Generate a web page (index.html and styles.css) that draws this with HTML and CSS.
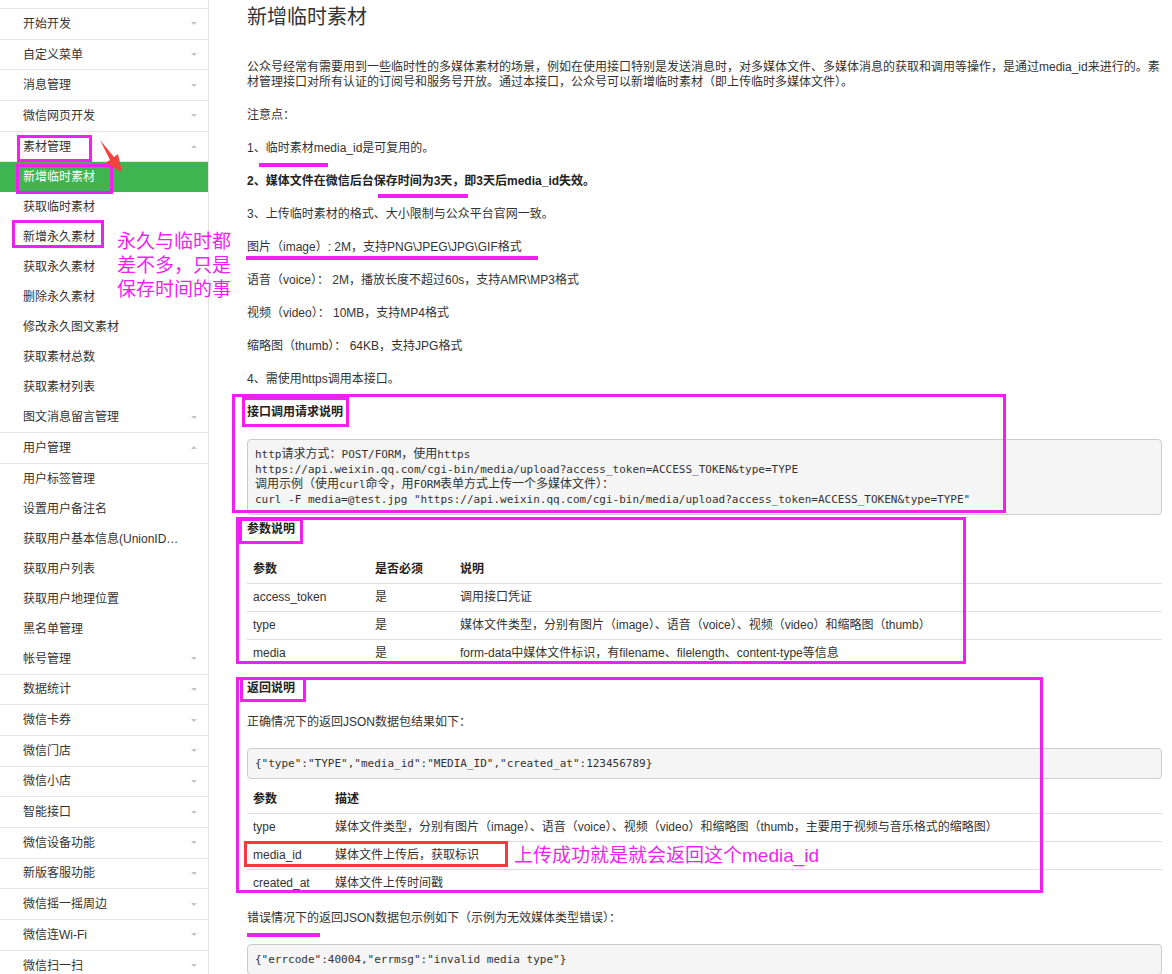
FILE: index.html
```html
<!DOCTYPE html>
<html lang="zh-CN">
<head>
<meta charset="utf-8">
<title>新增临时素材</title>
<link rel="stylesheet" href="styles.css">
</head>
<body>
<div class="page">
  <nav class="nav">
    <ul class="nav-list">
      <li class="nav-item nav-head"><span class="label">开始开发</span><i class="caret"></i></li>
      <li class="nav-item nav-head"><span class="label">自定义菜单</span><i class="caret"></i></li>
      <li class="nav-item nav-head"><span class="label">消息管理</span><i class="caret"></i></li>
      <li class="nav-item nav-head"><span class="label">微信网页开发</span><i class="caret"></i></li>
      <li class="nav-item nav-head"><span class="label">素材管理</span><i class="caret up"></i></li>
      <li class="nav-item active"><span class="label">新增临时素材</span></li>
      <li class="nav-item"><span class="label">获取临时素材</span></li>
      <li class="nav-item"><span class="label">新增永久素材</span></li>
      <li class="nav-item"><span class="label">获取永久素材</span></li>
      <li class="nav-item"><span class="label">删除永久素材</span></li>
      <li class="nav-item"><span class="label">修改永久图文素材</span></li>
      <li class="nav-item"><span class="label">获取素材总数</span></li>
      <li class="nav-item"><span class="label">获取素材列表</span></li>
      <li class="nav-item nav-head"><span class="label">图文消息留言管理</span><i class="caret"></i></li>
      <li class="nav-item nav-head"><span class="label">用户管理</span><i class="caret up"></i></li>
      <li class="nav-item"><span class="label">用户标签管理</span></li>
      <li class="nav-item"><span class="label">设置用户备注名</span></li>
      <li class="nav-item"><span class="label">获取用户基本信息(UnionID机制)</span></li>
      <li class="nav-item"><span class="label">获取用户列表</span></li>
      <li class="nav-item"><span class="label">获取用户地理位置</span></li>
      <li class="nav-item"><span class="label">黑名单管理</span></li>
      <li class="nav-item nav-head"><span class="label">帐号管理</span><i class="caret"></i></li>
      <li class="nav-item nav-head"><span class="label">数据统计</span><i class="caret"></i></li>
      <li class="nav-item nav-head"><span class="label">微信卡券</span><i class="caret"></i></li>
      <li class="nav-item nav-head"><span class="label">微信门店</span><i class="caret"></i></li>
      <li class="nav-item nav-head"><span class="label">微信小店</span><i class="caret"></i></li>
      <li class="nav-item nav-head"><span class="label">智能接口</span><i class="caret"></i></li>
      <li class="nav-item nav-head"><span class="label">微信设备功能</span><i class="caret"></i></li>
      <li class="nav-item nav-head"><span class="label">新版客服功能</span><i class="caret"></i></li>
      <li class="nav-item nav-head"><span class="label">微信摇一摇周边</span><i class="caret"></i></li>
      <li class="nav-item nav-head"><span class="label">微信连Wi-Fi</span><i class="caret"></i></li>
      <li class="nav-item nav-head"><span class="label">微信扫一扫</span><i class="caret"></i></li>
    </ul>
  </nav>

  <main class="main">
    <h1 class="title">新增临时素材</h1>
    <p>公众号经常有需要用到一些临时性的多媒体素材的场景，例如在使用接口特别是发送消息时，对多媒体文件、多媒体消息的获取和调用等操作，是通过media_id来进行的。素材管理接口对所有认证的订阅号和服务号开放。通过本接口，公众号可以新增临时素材（即上传临时多媒体文件）。</p>
    <p>注意点：</p>
    <p>1、临时素材media_id是可复用的。</p>
    <p class="strong">2、媒体文件在微信后台保存时间为3天，即3天后media_id失效。</p>
    <p>3、上传临时素材的格式、大小限制与公众平台官网一致。</p>
    <p>图片（image）: 2M，支持PNG\JPEG\JPG\GIF格式</p>
    <p>语音（voice）： 2M，播放长度不超过60s，支持AMR\MP3格式</p>
    <p>视频（video）： 10MB，支持MP4格式</p>
    <p>缩略图（thumb）： 64KB，支持JPG格式</p>
    <p>4、需使用https调用本接口。</p>

    <h4 class="sec">接口调用请求说明</h4>
<pre class="code">http<span class="zh">请求方式：</span>POST/FORM<span class="zh">，使用</span>https
https://api.weixin.qq.com/cgi-bin/media/upload?access_token=ACCESS_TOKEN&amp;type=TYPE
<span class="zh">调用示例（使用</span>curl<span class="zh">命令，用</span>FORM<span class="zh">表单方式上传一个多媒体文件）：</span>
curl -F media=@test.jpg "https://api.weixin.qq.com/cgi-bin/media/upload?access_token=ACCESS_TOKEN&amp;type=TYPE"</pre>

    <h4 class="sec">参数说明</h4>
    <table class="tbl">
      <colgroup><col class="c-param"><col class="c-req"><col></colgroup>
      <thead><tr><th>参数</th><th>是否必须</th><th>说明</th></tr></thead>
      <tbody>
        <tr><td>access_token</td><td>是</td><td>调用接口凭证</td></tr>
        <tr><td>type</td><td>是</td><td>媒体文件类型，分别有图片（image）、语音（voice）、视频（video）和缩略图（thumb）</td></tr>
        <tr><td>media</td><td>是</td><td>form-data中媒体文件标识，有filename、filelength、content-type等信息</td></tr>
      </tbody>
    </table>

    <h4 class="sec">返回说明</h4>
    <p>正确情况下的返回JSON数据包结果如下：</p>
<pre class="code">{"type":"TYPE","media_id":"MEDIA_ID","created_at":123456789}</pre>
    <table class="tbl">
      <colgroup><col class="c-param2"><col></colgroup>
      <thead><tr><th>参数</th><th>描述</th></tr></thead>
      <tbody>
        <tr><td>type</td><td>媒体文件类型，分别有图片（image）、语音（voice）、视频（video）和缩略图（thumb，主要用于视频与音乐格式的缩略图）</td></tr>
        <tr><td>media_id</td><td>媒体文件上传后，获取标识</td></tr>
        <tr><td>created_at</td><td>媒体文件上传时间戳</td></tr>
      </tbody>
    </table>
    <p>错误情况下的返回JSON数据包示例如下（示例为无效媒体类型错误）：</p>
<pre class="code">{"errcode":40004,"errmsg":"invalid media type"}</pre>
  </main>

  <!-- annotations drawn over the page -->
  <div class="mark mk-1"></div>
  <div class="mark mk-2"></div>
  <div class="mark mk-3"></div>
  <svg class="arrow" viewBox="0 0 32 42" width="32" height="42" aria-hidden="true">
    <polygon points="5,5 19,22 23,19 27,37 10,28 15,25" fill="#f5413f"/>
  </svg>
  <div class="note note-1">永久与临时都<br>差不多，只是<br>保存时间的事</div>
  <div class="uline ul-1"></div>
  <div class="uline ul-2"></div>
  <div class="uline ul-3"></div>
  <div class="mark mk-4"></div>
  <div class="mark mk-5"></div>
  <div class="mark mk-6"></div>
  <div class="mark mk-7"></div>
  <div class="mark mk-8"></div>
  <div class="mark mk-9"></div>
  <div class="redbox"></div>
  <div class="note note-2">上传成功就是就会返回这个media_id</div>
  <div class="uline ul-4"></div>
</div>
</body>
</html>
```

FILE: styles.css
```css
html, body {
  margin: 0;
  padding: 0;
  overflow: hidden;
}
body {
  font-family: "Liberation Sans", "Noto Sans CJK SC", sans-serif;
  font-size: 12px;
  color: #333;
  background: #fff;
}
.page {
  position: relative;
  display: flex;
  height: 974px;
  overflow: hidden;
}

/* ---------- sidebar ---------- */
.nav {
  width: 208px;
  flex-shrink: 0;
  border-right: 1px solid #e4e4e4;
  padding-top: 8px;
}
.nav-list {
  list-style: none;
  margin: 0;
  padding: 0;
  border-top: 1px solid #e5e5e5;
}
.nav-item {
  height: 30px;
  display: flex;
  align-items: center;
  padding: 0 11px 0 23px;
  color: #333;
}
.nav-head {
  height: 29.7px;
  border-bottom: 1px solid #e5e5e5;
}
.nav-item.active {
  background: #3fb54f;
  color: #fff;
}
.label {
  white-space: nowrap;
  overflow: hidden;
  text-overflow: ellipsis;
  max-width: 158px;
  line-height: 16px;
}
.caret {
  margin-left: auto;
  width: 0;
  height: 0;
  border-left: 3.5px solid transparent;
  border-right: 3.5px solid transparent;
  border-top: 3px solid #c4c4c4;
}
.caret.up {
  border-top: 0;
  border-bottom: 3px solid #c4c4c4;
}

/* ---------- main ---------- */
.main {
  flex: 1;
  min-width: 0;
  padding: 0 10px 0 38px;
}
.title {
  font-size: 20px;
  font-weight: normal;
  line-height: 26px;
  margin: 4px 0 30px;
  color: #333;
}
.main p {
  margin: 0 0 18px;
  line-height: 15px;
}
.main p.strong {
  font-weight: bold;
  color: #222;
}
.sec {
  font-size: 12px;
  font-weight: bold;
  line-height: 15px;
  margin: 0 0 19px;
  color: #222;
}
.code {
  margin: 0 0 7px;
  padding: 7px;
  border: 1px solid #ccc;
  border-radius: 4px;
  background: #f5f5f5;
  font-family: "DejaVu Sans Mono", monospace;
  font-size: 11px;
  line-height: 15px;
  color: #333;
  white-space: pre;
  overflow: hidden;
}
.code .zh {
  font-family: "Noto Sans CJK SC", sans-serif;
  font-size: 12px;
  line-height: 12px;
}
.tbl {
  width: 100%;
  border-collapse: collapse;
  table-layout: fixed;
  margin: 0 0 14px;
}
.c-param { width: 122px; }
.c-req { width: 85px; }
.c-param2 { width: 82px; }
.tbl th,
.tbl td {
  padding: 6px;
  line-height: 15px;
  text-align: left;
  vertical-align: top;
  white-space: nowrap;
}
.tbl th {
  font-weight: bold;
  color: #222;
}
.tbl td {
  border-top: 1px solid #ddd;
}

/* ---------- annotations ---------- */
.mark {
  position: absolute;
  box-sizing: border-box;
  border: 3px solid #f21ff2;
}
.mk-1 { left: 17px; top: 135px; width: 75px; height: 27px; }
.mk-2 { left: 16px; top: 164px; width: 97px; height: 30px; }
.mk-3 { left: 12px; top: 220px; width: 92px; height: 28px; }
.mk-4 { left: 232px; top: 394px; width: 774px; height: 119px; }
.mk-5 { left: 242px; top: 397px; width: 107px; height: 30px; }
.mk-6 { left: 236px; top: 517px; width: 730px; height: 147px; }
.mk-7 { left: 239px; top: 518px; width: 64px; height: 26px; }
.mk-8 { left: 236px; top: 677px; width: 807px; height: 216px; }
.mk-9 { left: 240px; top: 677px; width: 66px; height: 25px; }
.redbox {
  position: absolute;
  box-sizing: border-box;
  left: 244px;
  top: 841px;
  width: 264px;
  height: 26px;
  border: 3px solid #f03c3c;
}
.arrow {
  position: absolute;
  left: 95px;
  top: 135px;
}
.uline {
  position: absolute;
  height: 4px;
  background: #f21ff2;
}
.ul-1 { left: 259px; top: 163px; width: 69px; }
.ul-2 { left: 378px; top: 194px; width: 90px; }
.ul-3 { left: 246px; top: 256px; width: 292px; }
.ul-4 { left: 247px; top: 933px; width: 73px; }
.note {
  position: absolute;
  color: #f21ff2;
  font-family: "Liberation Sans", "Noto Sans CJK SC", sans-serif;
  font-size: 19px;
  line-height: 24px;
  white-space: nowrap;
}
.note-1 { left: 117px; top: 230px; }
.note-2 { left: 514px; top: 844px; }
```
